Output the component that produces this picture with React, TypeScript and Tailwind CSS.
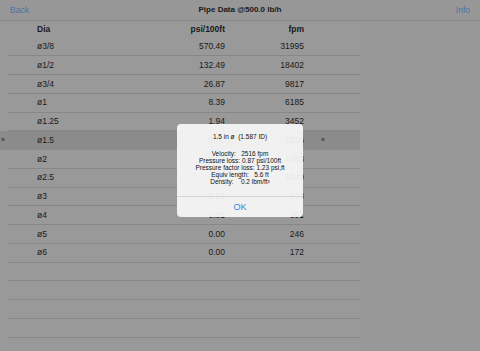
import React from "react";

const rows = [
  { dia: "ø3/8", psi: "570.49", fpm: "31995" },
  { dia: "ø1/2", psi: "132.49", fpm: "18402" },
  { dia: "ø3/4", psi: "26.87", fpm: "9817" },
  { dia: "ø1", psi: "8.39", fpm: "6185" },
  { dia: "ø1.25", psi: "1.94", fpm: "3452" },
  { dia: "ø1.5", psi: "0.87", fpm: "2516", selected: true },
  { dia: "ø2", psi: "0.23", fpm: "1483" },
  { dia: "ø2.5", psi: "0.10", fpm: "1040" },
  { dia: "ø3", psi: "0.03", fpm: "673" },
  { dia: "ø4", psi: "0.01", fpm: "391" },
  { dia: "ø5", psi: "0.00", fpm: "246" },
  { dia: "ø6", psi: "0.00", fpm: "172" },
  { dia: "", psi: "", fpm: "" },
  { dia: "", psi: "", fpm: "" },
  { dia: "", psi: "", fpm: "" },
  { dia: "", psi: "", fpm: "" },
  { dia: "", psi: "", fpm: "" },
];

export default function App() {
  return (
    <div
      className="relative h-[351px] w-[480px] overflow-hidden bg-[#999999] text-[#1a1a1a]"
      style={{ fontFamily: '"Liberation Sans", Arial, sans-serif' }}
    >
      {/* nav bar */}
      <div className="flex h-[21px] items-center border-b border-[#878787] bg-[#979797] px-[10px] text-[8.5px]">
        <span className="w-[60px] text-[#4a73a3]">Back</span>
        <span className="flex-1 text-center text-[8px] font-bold">Pipe Data @500.0 lb/h</span>
        <span className="w-[60px] text-right text-[#4a73a3]">Info</span>
      </div>

      <div className="flex">
        <div className="w-[360px]">
          {/* column headers */}
          <div className="flex h-[16.5px] items-center pl-[37px] text-[8.5px] font-bold">
            <span className="w-[120px]">Dia</span>
            <span className="w-[68px] text-right">psi/100ft</span>
            <span className="w-[79px] text-right">fpm</span>
          </div>

          {rows.map((r, i) =>
            r.selected ? (
              <div key={i} className="flex h-[18.75px] items-center bg-[#8b8b8b] text-[8.5px]">
                <span className="w-[37px] pl-[1px] text-[7px]">»</span>
                <span className="w-[120px]">{r.dia}</span>
                <span className="w-[68px] text-right">{r.psi}</span>
                <span className="w-[79px] text-right">{r.fpm}</span>
                <span className="ml-[17px] text-[7px]">«</span>
              </div>
            ) : (
              <div key={i} className="ml-[8px] flex h-[18.75px] items-center border-b border-[#878787] pl-[29px] text-[8.5px]">
                <span className="w-[120px]">{r.dia}</span>
                <span className="w-[68px] text-right">{r.psi}</span>
                <span className="w-[79px] text-right">{r.fpm}</span>
              </div>
            )
          )}
        </div>
        <div className="flex-1 bg-[#989898]" />
      </div>

      {/* alert */}
      <div className="absolute left-[177px] top-[124px] flex w-[126px] flex-col rounded-[4px] bg-[#f7f7f7]/[0.93] text-center text-[6.5px] leading-[7px] text-[#111]">
        <div className="pt-[9px]">1.5 in ø&nbsp;&nbsp;(1.587 ID)</div>
        <div className="pt-[10px] pb-[11px]">
          <div>Velocity:&nbsp;&nbsp; 2516 fpm</div>
          <div>Pressure loss: 0.87 psi/100ft</div>
          <div>Pressure factor loss: 1.23 psi,ft</div>
          <div>Equiv length:&nbsp;&nbsp; 5.6 ft</div>
          <div>Density:&nbsp;&nbsp;&nbsp; 0.2 lbm/ft³</div>
        </div>
        <div className="flex h-[21px] items-center justify-center border-t border-[#d6d6d6] text-[9px] text-[#2f86e6]">
          OK
        </div>
      </div>
    </div>
  );
}
